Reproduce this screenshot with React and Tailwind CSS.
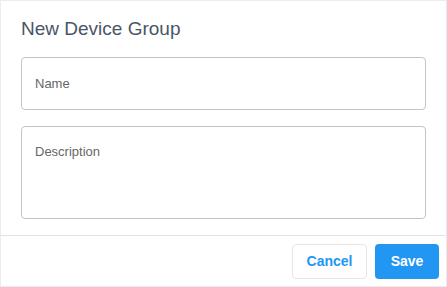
export default function App() {
    return (
        <div className="w-[447px] h-[287px] bg-white font-['Liberation_Sans',Arial,sans-serif]">
            <div className="h-full border border-[#ececec] flex flex-col">
                <div className="px-5 pt-[15px]">
                    <h2 className="text-[19px] leading-[26px] text-[#4a5568]">New Device Group</h2>
                    <div className="mt-[15px] flex flex-col gap-4">
                        <div className="h-[53px] border border-[#c4c4c4] rounded-[4px] px-[13px] flex items-center text-[13px] text-[#666]">
                            Name
                        </div>
                        <div className="h-[93px] border border-[#c4c4c4] rounded-[4px] px-[13px] pt-[15px] text-[13px] text-[#666]">
                            Description
                        </div>
                    </div>
                </div>
                <div className="mt-auto border-t border-[#e2e2e2] h-[51px] flex items-center justify-end gap-2 pr-[7px]">
                    <button className="h-[35px] w-[75px] rounded-[4px] border border-[#e6e6e6] text-[14px] font-semibold text-[#2196f3] bg-white">
                        Cancel
                    </button>
                    <button className="h-[35px] w-[64px] rounded-[4px] bg-[#2196f3] text-[14px] font-semibold text-white">
                        Save
                    </button>
                </div>
            </div>
        </div>
    );
}
